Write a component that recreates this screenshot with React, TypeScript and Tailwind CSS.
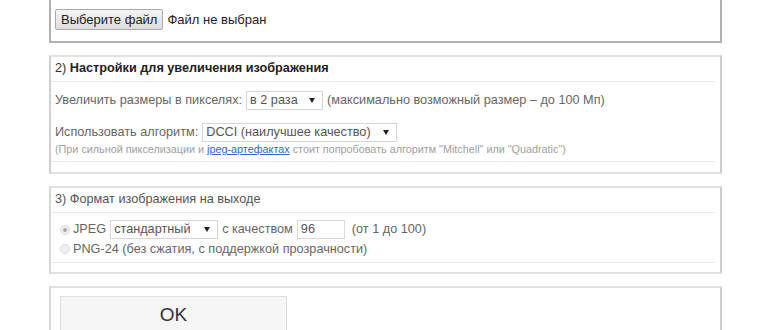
const font = { fontFamily: '"Liberation Sans", Arial, sans-serif' };

const Arrow = () => (
  <svg width="6" height="5" viewBox="0 0 6 5" className="shrink-0">
    <path d="M0 0 L6 0 L3 5 Z" fill="#222" />
  </svg>
);

const FakeSelect = ({ value, width }: { value: string; width: string }) => (
  <span
    className={`inline-flex items-center justify-between h-[19px] pl-[3px] pr-[7px] border border-[#d6d6d6] bg-white text-[12.7px] text-[#555] align-middle ${width}`}
  >
    <span>{value}</span>
    <Arrow />
  </span>
);

const Radio = ({ checked }: { checked?: boolean }) => (
  <span className="inline-flex items-center justify-center w-[10px] h-[10px] rounded-full border border-[#dcdcdc] bg-[#f0f0f0] mr-[3px]">
    {checked && <span className="w-[4px] h-[4px] rounded-full bg-[#aaa]" />}
  </span>
);

const Divider = () => <div className="h-px bg-[#e8e8e8] mr-[5px]" />;

export default function App() {
  return (
    <div className="w-[770px] h-[330px] overflow-hidden bg-white" style={font}>
      <div className="w-[673px] ml-[49px] flex flex-col gap-[12px]">
        {/* 1) file */}
        <div className="border-2 border-t-0 border-[#b0b0b0] pl-[4px] pt-[9px] pb-[11px] flex items-center gap-[4px]">
          <span className="inline-flex items-center h-[21px] px-[5px] border border-[#a9a9a9] rounded-[2px] bg-gradient-to-b from-[#f4f4f4] to-[#dedede] text-[13px] text-[#222]">
            Выберите файл
          </span>
          <span className="text-[13px] text-[#222]">Файл не выбран</span>
        </div>

        {/* 2) settings */}
        <div className="border-2 border-[#e2e2e2] border-l-[#cfcfcf] border-r-[#cdcdcd]">
          <div className="pl-[4px] pt-[3px] pb-[5px] leading-[16px] text-[12.7px] text-[#333]">
            2) <b className="text-[#222]">Настройки для увеличения изображения</b>
          </div>
          <Divider />
          <div className="pl-[4px] pt-[9px] pb-[5px]">
            <div className="flex items-center gap-[4px] text-[12.7px] text-[#666]">
              <span>Увеличить размеры в пикселях:</span>
              <FakeSelect value="в 2 раза" width="w-[77px]" />
              <span>(максимально возможный размер – до 100 Мп)</span>
            </div>
            <div className="flex items-center gap-[4px] text-[12.7px] text-[#666] mt-[13px]">
              <span>Использовать алгоритм:</span>
              <FakeSelect value="DCCI (наилучшее качество)" width="w-[195px]" />
            </div>
            <div className="text-[10.8px] leading-[13px] text-[#a0a0a0] mt-px">
              (При сильной пикселизации и{" "}
              <a href="#" className="text-[#3366cc] underline">
                jpeg-артефактах
              </a>{" "}
              стоит попробовать алгоритм "Mitchell" или "Quadratic")
            </div>
          </div>
          <Divider />
          <div className="h-[10px]" />
        </div>

        {/* 3) format */}
        <div className="border-2 border-[#e2e2e2] border-l-[#d6d6d6] border-r-[#cdcdcd]">
          <div className="pl-[4px] pt-[3px] pb-[5px] leading-[16px] text-[12.7px] text-[#555]">
            3) Формат изображения на выходе
          </div>
          <Divider />
          <div className="pl-[9px] pt-[7px] pb-[4px] text-[12.7px] text-[#666]">
            <div className="flex items-center gap-[4px]">
              <span className="flex items-center">
                <Radio checked />
                JPEG
              </span>
              <FakeSelect value="стандартный" width="w-[108px]" />
              <span>с качеством</span>
              <span className="inline-flex items-center h-[19px] w-[48px] pl-[3px] border border-[#dadada] text-[#555]">
                96
              </span>
              <span className="ml-[3px]">(от 1 до 100)</span>
            </div>
            <div className="flex items-center h-[18px] mt-px">
              <Radio />
              PNG-24 (без сжатия, с поддержкой прозрачности)
            </div>
          </div>
          <Divider />
          <div className="h-[9px]" />
        </div>

        {/* OK */}
        <div className="border-2 border-b-0 border-[#e2e2e2] border-l-[#d6d6d6] border-r-[#cdcdcd] pl-[9px] pt-[8px] h-[60px]">
          <div className="w-[227px] h-[38px] border border-[#dedede] bg-[#f6f6f6] flex items-center justify-center text-[19px] text-[#333]">
            OK
          </div>
        </div>
      </div>
    </div>
  );
}
